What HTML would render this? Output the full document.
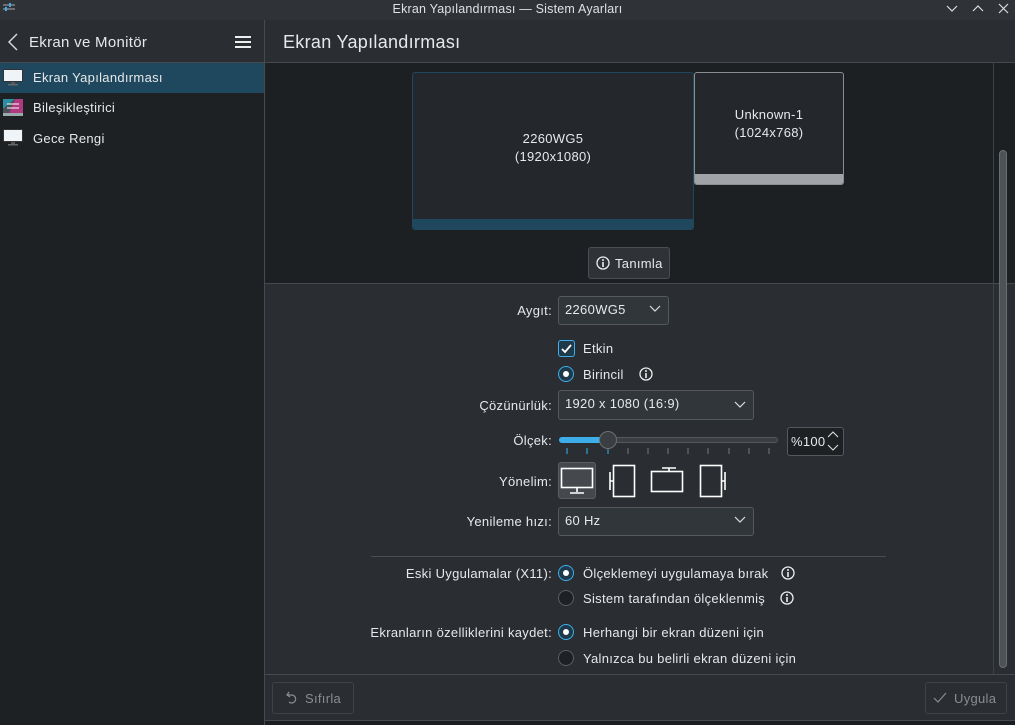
<!DOCTYPE html>
<html><head><meta charset="utf-8"><style>
*{margin:0;padding:0;box-sizing:border-box}
body{width:1015px;height:725px;overflow:hidden;background:#1b1e20;font-family:"Liberation Sans","DejaVu Sans",sans-serif;font-size:13px;color:#e6e8ea;position:relative;letter-spacing:0.3px}
.a{position:absolute}
.lbl{position:absolute;text-align:right;width:300px;white-space:nowrap}
.combo{position:absolute;border:1px solid #55595e;border-radius:3px;background:#31363b;padding-left:6px;line-height:26px}
.chev{position:absolute;right:7px;top:8px}
.radio{position:absolute;width:16px;height:16px;border-radius:50%;border:1px solid #5a5e63;background:#1e2124}
.radio.on{border-color:#3daee9;background:#1e3a4a}
.radio.on::after{content:"";position:absolute;left:4px;top:4px;width:6px;height:6px;border-radius:50%;background:#fff}
.t{position:absolute;white-space:nowrap}
.btn{position:absolute;border:1px solid #4a4e53;border-radius:3px;background:#2f3338}
</style></head><body>
<div class="a" style="left:0;top:0;width:1015px;height:20px;background:#2f3337"></div>
<svg class="a" style="left:2px;top:2px" width="14" height="10"><path d="M1 3h12M1 7h12" stroke="#aaa" stroke-width="1"/><rect x="7" y="1" width="2" height="4" fill="#3daee9"/><rect x="3" y="5" width="2" height="4" fill="#3daee9"/></svg>
<div class="t" style="left:0;width:1015px;text-align:center;top:2px;font-size:12.5px;color:#dfe1e3;letter-spacing:0.2px">Ekran Yapılandırması — Sistem Ayarları</div>
<svg class="a" style="left:945px;top:2px" width="70" height="14"><path d="M2 4l5 5 5-5M28 9l5-5 5 5M54 2l9 9M63 2l-9 9" stroke="#dcdcdc" stroke-width="1.2" fill="none"/></svg>
<div class="a" style="left:0;top:20px;width:1015px;height:42px;background:#2a2e32"></div>
<div class="a" style="left:0;top:62px;width:1015px;height:1px;background:#46494d"></div>
<div class="a" style="left:264px;top:20px;width:1px;height:705px;background:#46494d"></div>
<svg class="a" style="left:7px;top:33px" width="12" height="18"><path d="M10 1L2 9l8 8" stroke="#ddd" stroke-width="1.4" fill="none"/></svg>
<div class="t" style="left:29px;top:34px;font-size:15px">Ekran ve Monitör</div>
<svg class="a" style="left:235px;top:36px" width="16" height="12"><path d="M0 1h16M0 6h16M0 11h16" stroke="#eee" stroke-width="2"/></svg>
<div class="t" style="left:283px;top:32px;font-size:18px">Ekran Yapılandırması</div>
<div class="a" style="left:0;top:63px;width:264px;height:662px;background:#1e2124"></div>
<div class="a" style="left:0;top:63px;width:264px;height:30px;background:#1f475d"></div>
<svg class="a" style="left:3px;top:69px" width="20" height="18"><rect x="0.5" y="0.5" width="19" height="12" fill="#eef4f8" stroke="#333"/><rect x="8" y="13" width="4" height="2" fill="#555"/><rect x="5" y="15" width="10" height="1.5" fill="#666"/></svg>
<div class="t" style="left:33px;top:70px">Ekran Yapılandırması</div>
<svg class="a" style="left:3px;top:99px" width="20" height="18"><polygon points="0,0 12,0 0,10" fill="#2a8fa0"/><polygon points="12,0 20,0 20,14 6,14" fill="#b03a7f"/><polygon points="0,10 12,0 6,14 0,14" fill="#4a4f58"/><path d="M4 5h12M4 9h12" stroke="#fff"/><rect x="0" y="14" width="20" height="3" fill="#9aa"/></svg>
<div class="t" style="left:33px;top:100px">Bileşikleştirici</div>
<svg class="a" style="left:3px;top:129px" width="20" height="18"><rect x="0.5" y="0.5" width="19" height="12" fill="#eef4f8" stroke="#333"/><rect x="8" y="13" width="4" height="2" fill="#555"/><rect x="5" y="15" width="10" height="1.5" fill="#666"/></svg>
<div class="t" style="left:33px;top:131px">Gece Rengi</div>
<div class="a" style="left:265px;top:63px;width:750px;height:220px;background:#1d2023"></div>
<div class="a" style="left:265px;top:283px;width:750px;height:1px;background:#46494d"></div>
<div class="a" style="left:412px;top:72px;width:282px;height:158px;background:#24272b;border:1px solid #1f475d;border-radius:3px;overflow:hidden"><div class="a" style="left:0;bottom:0;width:100%;height:10px;background:#1f475d"></div></div>
<div class="t" style="left:412px;width:282px;text-align:center;top:130px;line-height:18px">2260WG5<br>(1920x1080)</div>
<div class="a" style="left:694px;top:72px;width:150px;height:113px;background:#24272b;border:1px solid #8a8e93;border-radius:3px;overflow:hidden"><div class="a" style="left:0;bottom:0;width:100%;height:10px;background:#a0a4a8"></div></div>
<div class="t" style="left:694px;width:150px;text-align:center;top:106px;line-height:18px">Unknown-1<br>(1024x768)</div>
<div class="btn" style="left:588px;top:247px;width:82px;height:32px"></div>
<svg class="a" style="left:596px;top:256px" width="14" height="14"><circle cx="7" cy="7" r="6" stroke="#eee" stroke-width="1.3" fill="none"/><path d="M7 6v5" stroke="#eee" stroke-width="1.6"/><circle cx="7" cy="4" r="1" fill="#eee"/></svg>
<div class="t" style="left:615px;top:256px">Tanımla</div>
<div class="a" style="left:265px;top:284px;width:750px;height:390px;background:#2a2e32"></div>
<div class="a" style="left:993px;top:63px;width:1px;height:611px;background:#3e4246"></div>
<div class="a" style="left:999px;top:150px;width:8px;height:518px;border-radius:4px;background:#4d5257;border:1px solid #6a6e72"></div>
<div class="lbl" style="left:252px;top:303px">Aygıt:</div>
<div class="combo" style="left:558px;top:296px;width:111px;height:29px">2260WG5<svg class="chev" width="12" height="8"><path d="M1 1l5 5 5-5" stroke="#ddd" fill="none" stroke-width="1.2"/></svg></div>
<div class="a" style="left:558px;top:340px;width:17px;height:17px;border:1px solid #3daee9;border-radius:3px;background:#1e3a4a"></div>
<svg class="a" style="left:560px;top:342px" width="13" height="13"><path d="M2 7l3 3 6-7" stroke="#fff" stroke-width="1.8" fill="none"/></svg>
<div class="t" style="left:583px;top:341px">Etkin</div>
<div class="radio on" style="left:558px;top:366px"></div>
<div class="t" style="left:583px;top:367px">Birincil</div>
<svg class="a" style="left:639px;top:367px" width="14" height="14"><circle cx="7" cy="7" r="6" stroke="#eee" stroke-width="1.3" fill="none"/><path d="M7 6v5" stroke="#eee" stroke-width="1.6"/><circle cx="7" cy="4" r="1" fill="#eee"/></svg>
<div class="lbl" style="left:252px;top:398px">Çözünürlük:</div>
<div class="combo" style="left:558px;top:390px;width:196px;height:30px">1920 x 1080 (16:9)<svg class="chev" width="12" height="8" style="top:10px"><path d="M1 1l5 5 5-5" stroke="#ddd" fill="none" stroke-width="1.2"/></svg></div>
<div class="lbl" style="left:252px;top:433px">Ölçek:</div>
<div class="a" style="left:559px;top:437px;width:219px;height:6px;border-radius:3px;background:#3b3f44;border:1px solid #55595d"></div>
<div class="a" style="left:559px;top:437px;width:50px;height:6px;border-radius:3px;background:#3daee9"></div>
<svg class="a" style="left:559px;top:444px" width="220" height="10"><path d="M8 4v6M28 4v6M49 4v6" stroke="#3daee9"/><path d="M69 4v6M89 4v6M109 4v6M129 4v6M149 4v6M170 4v6M190 4v6M210 4v6" stroke="#777"/></svg>
<div class="a" style="left:599px;top:431px;width:18px;height:18px;border-radius:50%;background:#3a3e43;border:1px solid #6b6f73"></div>
<div class="a" style="left:787px;top:427px;width:57px;height:29px;border:1px solid #55595e;border-radius:3px;background:#1e2124"></div>
<div class="t" style="left:791px;top:434px">%100</div>
<svg class="a" style="left:827px;top:430px" width="12" height="22"><path d="M1 7l5-5 5 5M1 15l5 5 5-5" stroke="#ddd" fill="none" stroke-width="1.1"/></svg>
<div class="lbl" style="left:252px;top:474px">Yönelim:</div>
<div class="a" style="left:558px;top:462px;width:38px;height:37px;border:1px solid #5a5e62;border-radius:3px;background:#45494e"></div>
<svg class="a" style="left:558px;top:462px" width="170" height="40"><g stroke="#fff" stroke-width="1.6" fill="none"><rect x="3.5" y="6.5" width="31" height="19"/><path d="M19 26v4M12 31h14"/><rect x="55.5" y="3.5" width="21" height="31"/><path d="M52 10v18M52 19h3"/><rect x="93.5" y="9.5" width="31" height="20"/><path d="M104 6h14M111 6v3"/><rect x="142.5" y="3.5" width="21" height="31"/><path d="M167 10v18M164 19h3"/></g></svg>
<div class="lbl" style="left:252px;top:514px">Yenileme hızı:</div>
<div class="combo" style="left:558px;top:507px;width:196px;height:29px">60 Hz<svg class="chev" width="12" height="8"><path d="M1 1l5 5 5-5" stroke="#ddd" fill="none" stroke-width="1.2"/></svg></div>
<div class="a" style="left:371px;top:556px;width:515px;height:1px;background:#4a4e52"></div>
<div class="lbl" style="left:252px;top:566px">Eski Uygulamalar (X11):</div>
<div class="radio on" style="left:558px;top:565px"></div>
<div class="t" style="left:583px;top:566px">Ölçeklemeyi uygulamaya bırak</div>
<svg class="a" style="left:781px;top:566px" width="14" height="14"><circle cx="7" cy="7" r="6" stroke="#eee" stroke-width="1.3" fill="none"/><path d="M7 6v5" stroke="#eee" stroke-width="1.6"/><circle cx="7" cy="4" r="1" fill="#eee"/></svg>
<div class="radio" style="left:558px;top:590px"></div>
<div class="t" style="left:583px;top:591px">Sistem tarafından ölçeklenmiş</div>
<svg class="a" style="left:780px;top:591px" width="14" height="14"><circle cx="7" cy="7" r="6" stroke="#eee" stroke-width="1.3" fill="none"/><path d="M7 6v5" stroke="#eee" stroke-width="1.6"/><circle cx="7" cy="4" r="1" fill="#eee"/></svg>
<div class="lbl" style="left:252px;top:625px">Ekranların özelliklerini kaydet:</div>
<div class="radio on" style="left:558px;top:624px"></div>
<div class="t" style="left:583px;top:625px">Herhangi bir ekran düzeni için</div>
<div class="radio" style="left:558px;top:650px"></div>
<div class="t" style="left:583px;top:651px">Yalnızca bu belirli ekran düzeni için</div>
<div class="a" style="left:265px;top:674px;width:750px;height:1px;background:#46494d"></div>
<div class="a" style="left:265px;top:675px;width:750px;height:45px;background:#2a2e32"></div>
<div class="a" style="left:265px;top:720px;width:750px;height:1px;background:#46494d"></div>
<div class="btn" style="left:272px;top:682px;width:82px;height:32px;background:#2a2e32;border-color:#3e4246"></div>
<svg class="a" style="left:286px;top:691px" width="12" height="14"><path d="M3 1L1 4l3 2M1 4h5a4 4 0 1 1-3 7" stroke="#8a8d90" stroke-width="1.2" fill="none"/></svg>
<div class="t" style="left:305px;top:691px;color:#8a8d90">Sıfırla</div>
<div class="btn" style="left:925px;top:682px;width:82px;height:32px;background:#2a2e32;border-color:#3e4246"></div>
<svg class="a" style="left:933px;top:692px" width="14" height="12"><path d="M1 6l4 4 8-9" stroke="#8a8d90" stroke-width="1.2" fill="none"/></svg>
<div class="t" style="left:954px;top:691px;color:#8a8d90">Uygula</div>
</body></html>
